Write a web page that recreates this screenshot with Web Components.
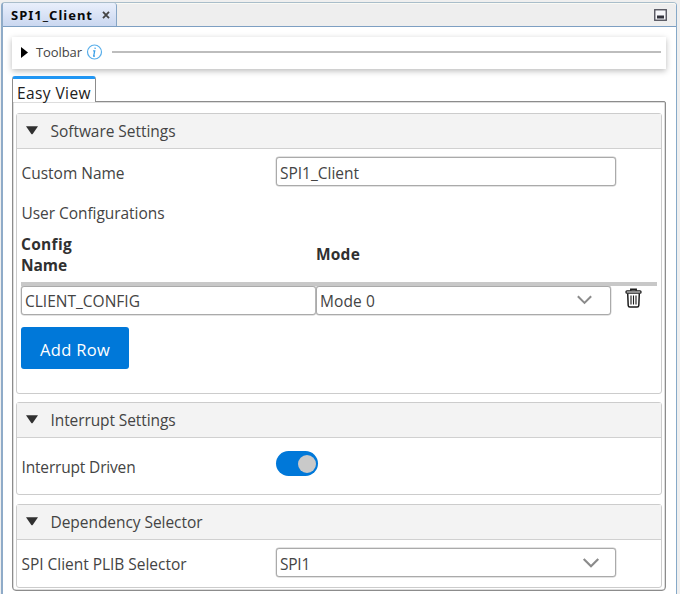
<!DOCTYPE html>
<html lang="en">
<head>
<meta charset="utf-8">
<title>SPI1_Client</title>
<style>
html,body{margin:0;height:100%;overflow:hidden;background:#efefef}
body{font:15.5px/21px "Open Sans","Noto Sans",sans-serif;color:#444}
</style>
</head>
<body>
<editor-window>
  <editor-tab slot="tab"><fit-text w="82">SPI1_Client</fit-text></editor-tab>
  <tool-bar><fit-text w="46">Toolbar</fit-text></tool-bar>
  <tab-view>
    <fit-text slot="label" w="74">Easy View</fit-text>
    <settings-panel style="height:281px;margin-bottom:8px">
      <fit-text slot="title" w="125">Software Settings</fit-text>
      <form-row style="margin-top:7px;--shift:4px">
        <fit-text slot="label" w="103">Custom Name</fit-text>
        <field-box><fit-text w="79">SPI1_Client</fit-text></field-box>
      </form-row>
      <form-row style="margin-top:11px;height:30px">
        <fit-text slot="label" w="143">User Configurations</fit-text>
      </form-row>
      <config-table>
        <span slot="name"><fit-text w="51">Config</fit-text><br><fit-text w="46">Name</fit-text></span>
        <fit-text slot="mode" w="44">Mode</fit-text>
        <field-box slot="row"><fit-text w="115">CLIENT_CONFIG</fit-text></field-box>
        <field-box slot="row" arrow="small"><fit-text w="55">Mode 0</fit-text></field-box>
      </config-table>
      <add-button><fit-text w="70">Add Row</fit-text></add-button>
    </settings-panel>
    <settings-panel style="height:93px;margin-bottom:9px">
      <fit-text slot="title" w="125">Interrupt Settings</fit-text>
      <form-row style="margin-top:13px">
        <fit-text slot="label" w="114">Interrupt Driven</fit-text>
        <toggle-switch></toggle-switch>
      </form-row>
    </settings-panel>
    <settings-panel style="height:84px">
      <fit-text slot="title" w="152">Dependency Selector</fit-text>
      <form-row style="margin-top:7px;--shift:4px">
        <fit-text slot="label" w="165">SPI Client PLIB Selector</fit-text>
        <field-box arrow="large"><fit-text w="30">SPI1</fit-text></field-box>
      </form-row>
    </settings-panel>
  </tab-view>
</editor-window>
<script>
const define = (name, html, setup) => customElements.define(name, class extends HTMLElement {
  connectedCallback() {
    if (this.shadowRoot) return;
    this.attachShadow({mode: "open"}).innerHTML = html;
    if (setup) setup(this);
  }
});

define("editor-window", `<style>
:host{display:flex;flex-direction:column;box-sizing:border-box;height:594px;padding:2px 3px 0 1px}
.frame{flex:1;display:flex;flex-direction:column;border:1px solid #86a9c8;border-left:2px solid #8fabc8;border-bottom:0;border-radius:4px 4px 0 0;border-top-color:#a9bdca;background:#fff}
.bar{height:23px;display:flex;align-items:center;justify-content:space-between;background:#eee;border-bottom:1px solid #7d9fc2;padding-right:9px;border-radius:3px 3px 0 0;box-shadow:inset 0 1px #fafaf4}
.body{flex:1;padding:10px 10px 0 9px}
</style><div class="frame"><div class="bar"><slot name="tab"></slot>
<svg width="13" height="12" viewBox="0 0 13 12"><rect x=".75" y=".75" width="11.5" height="10.5" fill="#f7f7fa" stroke="#55555f" stroke-width="1.4"/><rect x="3" y="6.5" width="7" height="3" fill="#33333c"/></svg>
</div><div class="body"><slot></slot></div></div>`);

define("editor-tab", `<style>
:host{display:flex;align-items:center;box-sizing:border-box;width:114px;height:23px;padding:0 6px 0 8px;justify-content:space-between;border-right:1px solid #86a5c5;border-radius:3px 3px 0 0;background:linear-gradient(#e9effb,#cad7f0);font:bold 13px/20px "Noto Sans","Open Sans",sans-serif;color:#080808}
</style><slot></slot><svg width="8" height="8" viewBox="0 0 8 8"><path d="M1 .8L7 7.2M7 .8L1 7.2" stroke="#444" stroke-width="1.8"/></svg>`);

define("tool-bar", `<style>
:host{display:flex;align-items:center;box-sizing:border-box;height:32px;padding:0 5px 2px 9px;margin-bottom:7px;background:#fff;box-shadow:0 2px 6px rgba(0,0,0,.27);font-size:13px;line-height:20px}
.tri{margin-right:8px}.info{margin:0 9px 0 4px}.rule{flex:1;height:2px;background:#bdbdbd}
</style><svg class="tri" width="7" height="11" viewBox="0 0 7 11"><path d="M0 0L7 5.5L0 11Z" fill="#000"/></svg><slot></slot>
<svg class="info" width="17" height="16" viewBox="0 0 17 16"><circle cx="8.5" cy="8" r="7" fill="none" stroke="#58aeea" stroke-width="1.2"/><path d="M9.2 3.6L9 4.8M7.1 6.8H8.7L7.7 12M7 12.2H9" stroke="#399fe8" stroke-width="1.3" fill="none"/></svg><div class="rule"></div>`);

define("tab-view", `<style>
:host{display:block}
.tab{position:relative;z-index:1;box-sizing:border-box;width:84px;height:26px;border:1px solid #8c8c8c;border-top:3px solid #2196f3;border-bottom:0;border-radius:3px 3px 0 0;background:#fff;padding:4px 0 0 4px;color:#202020;line-height:21px;margin-bottom:-1px}
.pane{box-sizing:border-box;height:490px;border:1px solid #8c8c8c;border-radius:0 2px 4px 4px;padding:11px 3px 0;box-shadow:inset 0 0 0 .5px #bbb}
</style><div class="tab"><slot name="label"></slot></div><div class="pane"><slot></slot></div>`);

define("settings-panel", `<style>
:host{display:block;box-sizing:border-box;border:1px solid #ccc;border-radius:3px;padding:0 4px}
.head{display:flex;align-items:center;margin:0 -4px;padding:1px 0 0 9px;box-sizing:border-box;background:#f3f3f3;border-bottom:1px solid #d0d0d0;gap:12px;height:35px}
svg{margin:-3px .5px 0 0}
</style><div class="head"><svg width="12" height="9" viewBox="0 0 13 9" preserveAspectRatio="none"><path d="M0 .3H13L7.4 7.8Q6.5 8.8 5.6 7.8Z" fill="#303030"/></svg><slot name="title"></slot></div><slot></slot>`);

define("form-row", `<style>
:host{display:grid;grid-template-columns:255px 340px;align-items:center;height:30px}
.label{padding:var(--shift,2px) 0 0 .5px}
</style><div class="label"><slot name="label"></slot></div><slot></slot>`);

define("field-box", `<style>
:host{display:flex;align-items:center;justify-content:space-between;box-sizing:border-box;height:29px;border:1px solid #aaa;border-radius:3px;padding:var(--shift,2px) 15px 0 3px;background:#fff;box-shadow:0 0 0 .4px #c8c8c8}
svg{margin-top:-3px}
</style><slot></slot>`, el => {
  const a = el.getAttribute("arrow");
  if (!a) return;
  const w = a === "small" ? 15 : 18;
  el.shadowRoot.innerHTML += `<svg width="${w}" height="10" viewBox="0 0 18 11" style="margin-right:${a === "small" ? 3 : 0}px"><path d="M1 1L9 9L17 1" fill="none" stroke="#8b8b8b" stroke-width="2.4"/></svg>`;
});

define("config-table", `<style>
:host{display:block}
.head{display:grid;grid-template-columns:295px 1fr;height:55px;font-weight:bold;color:#303030;border-bottom:4px solid #c8c8c8}
.row{display:grid;grid-template-columns:295px 295px 1fr;height:29px}
.head slot{display:block}
.name{padding-top:7px}
.mode{padding-top:17px}
svg{margin:2px 0 0 14px}
</style><div class="head"><div class="name"><slot name="name"></slot></div><div class="mode"><slot name="mode"></slot></div></div>
<div class="row"><slot name="row"></slot><svg width="17" height="20" viewBox="0 0 17 20"><g fill="none" stroke="#1c1c1c"><path d="M5.8 2.8V1.2H11.2V2.8" stroke-width="1.5"/><rect x="1" y="2.8" width="15" height="2.4" rx="1" stroke-width="1.3"/><path d="M2.7 5.5L3.2 17.5Q3.3 19 4.8 19H12.2Q13.7 19 13.8 17.5L14.3 5.5" stroke-width="1.5"/><path d="M6 7.5V16.5M8.5 7.5V16.5M11 7.5V16.5" stroke-width="1.1"/></g></svg></div>`);

define("add-button", `<style>
:host{display:flex;align-items:center;justify-content:center;box-sizing:border-box;width:108px;height:42px;margin-top:12px;padding-top:2px;border-radius:3px;background:#0078d9;color:#fff;font-size:16.5px}
</style><slot></slot>`);

define("toggle-switch", `<style>
:host{display:flex;align-items:center;justify-content:flex-end;box-sizing:border-box;width:42px;height:25px;border-radius:13px;background:#0078d9;padding-right:2px;margin-top:-5px}
i{width:18px;height:18px;border-radius:50%;background:#c9c9c9}
</style><i></i>`);

/* Spreads a line of text over a given width by adjusting its letter spacing. */
define("fit-text", `<style>:host{display:inline-block;white-space:nowrap}</style><slot></slot>`, el => {
  const want = +el.getAttribute("w");
  el.style.letterSpacing = (want - el.getBoundingClientRect().width) / el.textContent.length + "px";
  el.style.width = want + "px";
});
</script>
</body>
</html>
